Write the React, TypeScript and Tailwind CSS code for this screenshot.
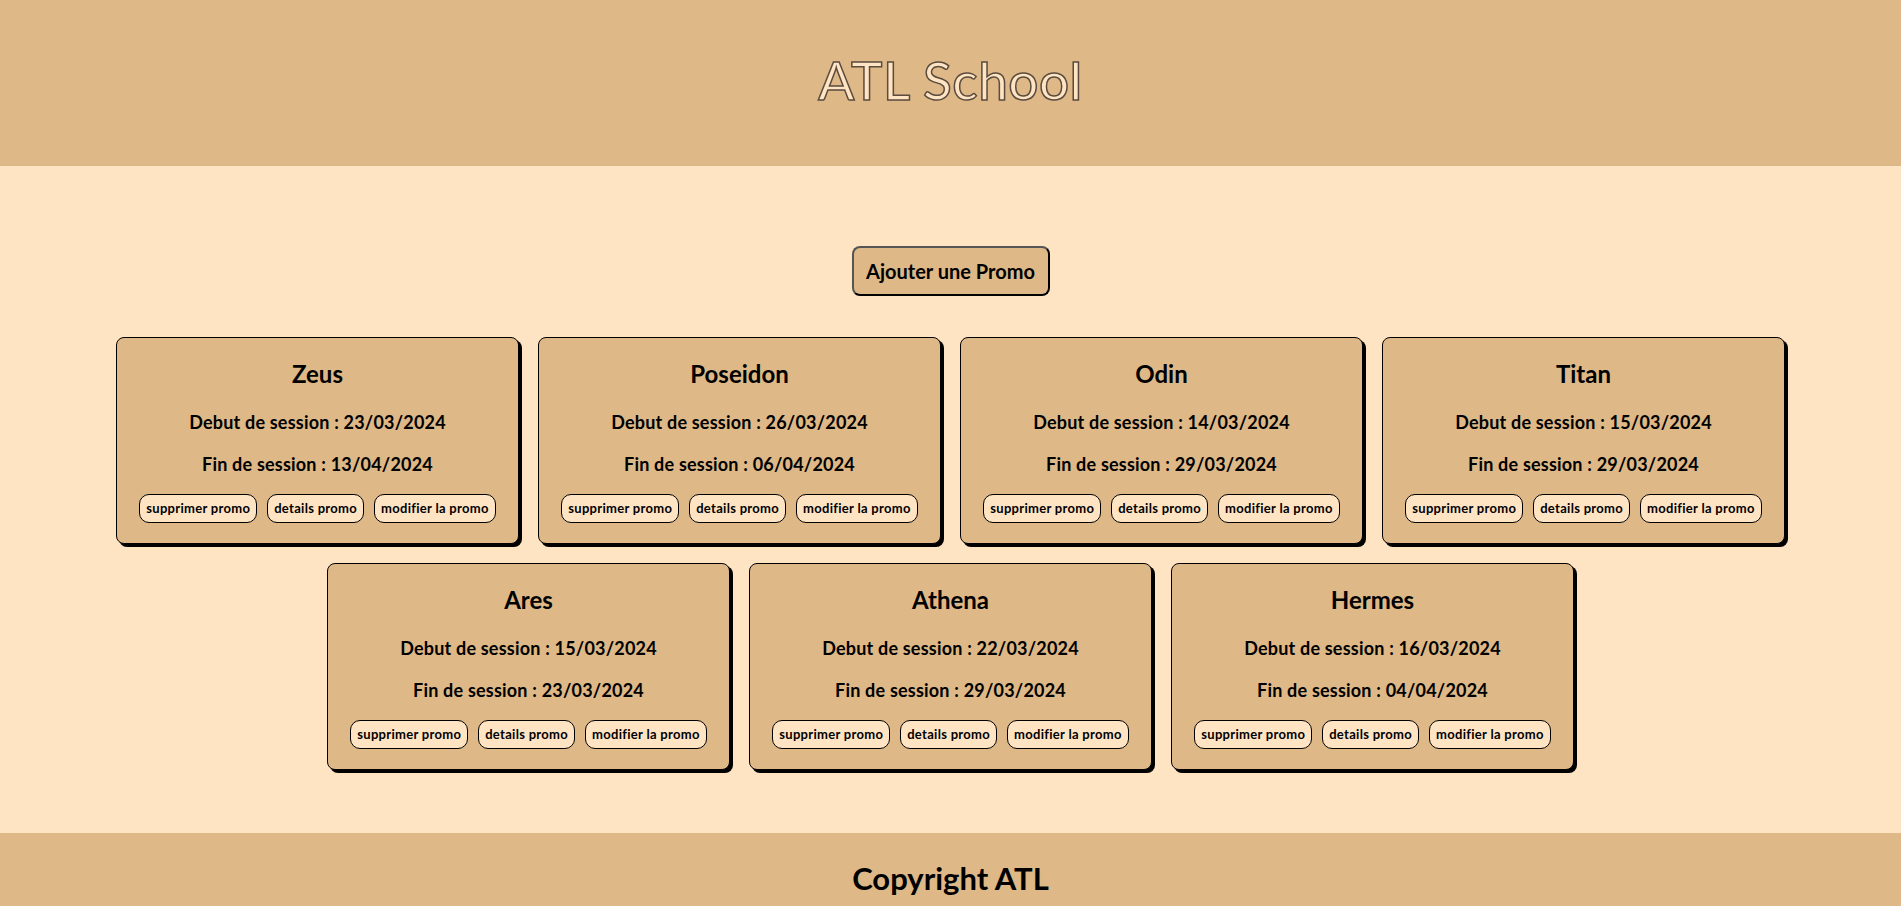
import React from 'react';

type Promo = { name: string; start: string; end: string };

const promos: Promo[] = [
  { name: 'Zeus', start: '23/03/2024', end: '13/04/2024' },
  { name: 'Poseidon', start: '26/03/2024', end: '06/04/2024' },
  { name: 'Odin', start: '14/03/2024', end: '29/03/2024' },
  { name: 'Titan', start: '15/03/2024', end: '29/03/2024' },
  { name: 'Ares', start: '15/03/2024', end: '23/03/2024' },
  { name: 'Athena', start: '22/03/2024', end: '29/03/2024' },
  { name: 'Hermes', start: '16/03/2024', end: '04/04/2024' },
];

const font = "font-['Lato','Noto_Sans',sans-serif]";

const PromoCard: React.FC<{ promo: Promo }> = ({ promo }) => {
  return (
    <article className="w-[403px] h-[207px] bg-[#deb887] border border-black rounded-lg shadow-[3px_3px_0_#000] flex flex-col items-center pt-[20px] text-black">
      <h2 className="text-[24px] font-bold leading-[32px]">{promo.name}</h2>
      <p className="mt-[20px] text-[18px] font-bold leading-[25px] tracking-[0.2px]">Debut de session : {promo.start}</p>
      <p className="mt-[17px] text-[18px] font-bold leading-[25px] tracking-[0.2px]">Fin de session : {promo.end}</p>
      <div className="mt-[17px] flex items-center gap-[10px]">
        <button className="h-[29px] px-[6px] bg-[#ffe4c4] border border-black rounded-[10px] text-[13px] font-bold tracking-[0.3px]">supprimer promo</button>
        <button className="h-[29px] px-[6px] bg-[#ffe4c4] border border-black rounded-[10px] text-[13px] font-bold tracking-[0.3px]">details promo</button>
        <button className="h-[29px] px-[6px] bg-[#ffe4c4] border border-black rounded-[10px] text-[13px] font-bold tracking-[0.3px]">modifier la promo</button>
      </div>
    </article>
  );
};

const App: React.FC = () => {
  return (
    <div className={`min-h-screen flex flex-col bg-[#ffe4c4] ${font}`}>
      <header className="h-[166px] shrink-0 bg-[#deb887] flex items-center justify-center">
        <h1 className="text-[53px] font-medium text-[#ffe4c4] [-webkit-text-stroke:1.5px_#5a4c3e] tracking-[0.5px] -mt-[6px]">
          ATL School
        </h1>
      </header>

      <main className="flex-1 flex flex-col items-center pt-[80px] pb-[58px]">
        <button className="w-[198px] h-[50px] bg-[#deb887] border-2 border-[#555] border-r-black border-b-black rounded-lg text-[20px] font-bold text-black">
          Ajouter une Promo
        </button>

        <section className="mt-[41px] w-full flex flex-wrap justify-center gap-[19px] px-[100px]">
          {promos.map((p) => (
            <PromoCard key={p.name} promo={p} />
          ))}
        </section>
      </main>

      <footer className="h-[73px] shrink-0 bg-[#deb887] flex items-end justify-center pb-[8px]">
        <h2 className="text-[31px] font-bold text-black leading-[40px]">Copyright ATL</h2>
      </footer>
    </div>
  );
};

export default App;
